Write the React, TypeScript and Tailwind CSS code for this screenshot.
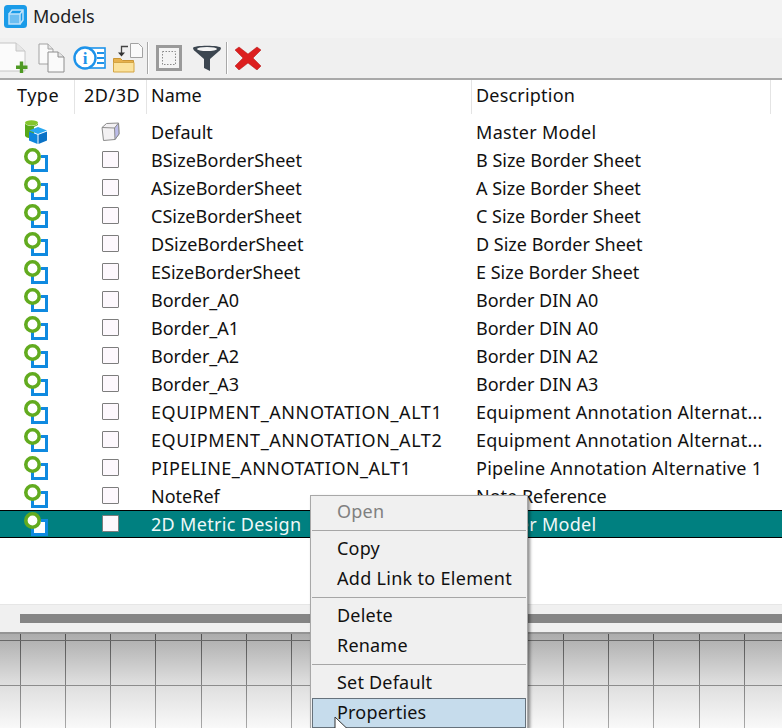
import type { ReactNode } from "react";

const FONT = "font-['Noto_Sans','Liberation_Sans',sans-serif]";

type Model = { name: string; desc: string; nameCls?: string; descCls?: string };

const models: Model[] = [
  { name: "BSizeBorderSheet", desc: "B Size Border Sheet" },
  { name: "ASizeBorderSheet", desc: "A Size Border Sheet" },
  { name: "CSizeBorderSheet", desc: "C Size Border Sheet" },
  { name: "DSizeBorderSheet", desc: "D Size Border Sheet" },
  { name: "ESizeBorderSheet", desc: "E Size Border Sheet" },
  { name: "Border_A0", desc: "Border DIN A0" },
  { name: "Border_A1", desc: "Border DIN A0" },
  { name: "Border_A2", desc: "Border DIN A2" },
  { name: "Border_A3", desc: "Border DIN A3" },
  { name: "EQUIPMENT_ANNOTATION_ALT1", desc: "Equipment Annotation Alternat...", nameCls: "tracking-[0.6px]", descCls: "tracking-[0.25px]" },
  { name: "EQUIPMENT_ANNOTATION_ALT2", desc: "Equipment Annotation Alternat...", nameCls: "tracking-[0.6px]", descCls: "tracking-[0.25px]" },
  { name: "PIPELINE_ANNOTATION_ALT1", desc: "Pipeline Annotation Alternative 1", nameCls: "tracking-[0.46px]", descCls: "tracking-[0.25px]" },
  { name: "NoteRef", desc: "Note Reference" },
];

function SheetIcon({ selected }: { selected?: boolean }) {
  return (
    <svg width="26" height="26" viewBox="0 0 26 26">
      {selected && <rect x="9" y="10" width="13" height="13" fill="#fff" />}
      <path d="M17 9.500h5.500v14H8.500V17" fill="none" stroke="#0f8ae0" strokeWidth="3" />
      <circle cx="8.500" cy="9.500" r="6.700" fill={selected ? "#fff" : "none"} stroke="#62ab1f" strokeWidth="3.600" />
    </svg>
  );
}

function DesignIcon() {
  return (
    <svg width="24" height="24" viewBox="0 0 24 24">
      <ellipse cx="7.500" cy="2.800" rx="6.500" ry="2.600" fill="#84c52c" />
      <path d="M1 3.500v12c0 1.500 3 2.700 6 2.700h3V7l4-2V3.500c-1 1.600-3 2.300-6.500 2.300S2 5 1 3.500z" fill="#58a81a" />
      <path d="M14 7l9 3.500-9 3.500-9-3.500z" fill="#2aa8f0" />
      <path d="M5 11.500l8.500 3.300V24L5 20.500z" fill="#0e86dc" />
      <path d="M23 11.500l-8.500 3.300V24l8.500-3.500z" fill="#0a72c6" />
    </svg>
  );
}

function CubeIcon() {
  return (
    <svg className="-ml-px mb-px" width="19" height="19" viewBox="0 0 19 19">
      <path d="M1 5.500L5.500 1.500 17.500 1 18 12l-4 5.500-11.500 1z" fill="#f3f1f3" stroke="#8c8c8c" />
      <path d="M13.500 6L17.500 1 18 12l-4 5.500z" fill="#bcbce8" stroke="#8c8c8c" />
      <path d="M1 5.500l12.500.5" stroke="#8c8c8c" fill="none" />
    </svg>
  );
}

function Check() {
  return <span className="block mb-px w-[17px] h-[17px] bg-[#fdf8fd] border border-[#7d7d7d] rounded-[1px]" />;
}

function Row({
  type,
  view,
  name,
  desc,
  selected,
  nameCls = "",
  descCls = "",
}: {
  type: ReactNode;
  view: ReactNode;
  name: string;
  desc: string;
  selected?: boolean;
  nameCls?: string;
  descCls?: string;
}) {
  return (
    <div
      className={`grid grid-cols-[75px_72px_325px_1fr] h-[28px] items-center ${
        selected ? "bg-[#008080] text-[#f0f8f8] border-y border-black" : "text-[#111]"
      }`}
    >
      <div className="pl-[24px] flex items-center">{type}</div>
      <div className="pl-[27px] flex items-center">{view}</div>
      <div className={`pl-[4px] whitespace-nowrap ${nameCls}`}>{name}</div>
      <div className={`pl-[4px] whitespace-nowrap ${descCls}`}>{desc}</div>
    </div>
  );
}

function ToolSep() {
  return <div className="w-px h-[32px] bg-[#a8a8a8] border-r border-white box-content" />;
}

function Toolbar() {
  return (
    <div className="h-[42px] bg-[#f0f0f0] border-b-2 border-[#a9a9a9] flex items-center relative overflow-hidden">
      <div className="flex items-center">
        {/* new model */}
        <svg width="29" height="32" viewBox="0 0 29 32">
          <path d="M-4 1h20l9 8v20H-4z" fill="#fbfbfb" stroke="#c6c6c6" />
          <path d="M16 1v8h9" fill="#e6e6e6" stroke="#c6c6c6" />
          <path d="M21.500 19.500v11.500M16 25.200h11.500" stroke="#4f9a24" strokeWidth="3.400" />
        </svg>
        {/* copy */}
        <svg className="ml-[9px]" width="27" height="30" viewBox="0 0 27 30">
          <path d="M1 1h9l5 5v15H1z" fill="#fafafa" stroke="#a2a2a2" />
          <path d="M10 1v5h5" fill="#e4e4e4" stroke="#a2a2a2" />
          <path d="M10 9h10l6 5v15H10z" fill="#fafafa" stroke="#8e8e8e" />
          <path d="M20 9v5h6" fill="#e4e4e4" stroke="#8e8e8e" />
        </svg>
        {/* properties */}
        <svg className="ml-[8px]" width="33" height="24" viewBox="0 0 33 24">
          <rect x="15" y="2" width="17" height="20" fill="#fff" stroke="#1d93ea" strokeWidth="1.600" />
          <path d="M24 7h7M24 12h7M24 17h7" stroke="#1d93ea" strokeWidth="2" />
          <circle cx="12" cy="12" r="10.500" fill="#fff" stroke="#1d93ea" strokeWidth="2.400" />
          <text x="12" y="18" textAnchor="middle" fontSize="17" fontWeight="700" fontFamily="Liberation Serif, serif" fill="#1d93ea">i</text>
        </svg>
        {/* import */}
        <svg className="ml-[6px]" width="31" height="30" viewBox="0 0 31 30">
          <path d="M18.500.5h8l4 4v10h-12z" fill="#fafafa" stroke="#a2a2a2" />
          <path d="M16 3.500h-6.500v8" fill="none" stroke="#444" strokeWidth="1.300" />
          <path d="M6 9.500h7l-3.500 4z" fill="#333" />
          <path d="M1.500 15.500h7l2 2h11v3h-20z" fill="#e7b14c" stroke="#c99535" />
          <path d="M1.500 19.500h20.500v9.500h-20.500z" fill="#fbe29c" stroke="#d3a545" />
        </svg>
        <div className="ml-[4px]"><ToolSep /></div>
        {/* select border */}
        <svg className="ml-[7px]" width="26" height="26" viewBox="0 0 26 26">
          <rect x="1.500" y="1.500" width="23" height="23" fill="#f4f4f4" stroke="#9a9a9a" strokeWidth="3" />
          <rect x="6.500" y="6.500" width="13" height="13" fill="none" stroke="#8a8a8a" strokeDasharray="1.500 1.500" />
        </svg>
        {/* filter */}
        <svg className="ml-[11px]" width="28" height="26" viewBox="0 0 28 26">
          <path d="M0 3c0-3 28-3 28 0 0 2-2 3-3 4l-8 7v12l-6-3v-9L3 7C2 6 0 5 0 3z" fill="#3c4650" />
          <ellipse cx="14" cy="4" rx="10" ry="2" fill="#f4f4f4" />
        </svg>
        <div className="ml-[5px]"><ToolSep /></div>
        {/* delete */}
        <svg className="ml-[7px]" width="26" height="24" viewBox="0 0 26 24">
          <path d="M4 1l9 7 9-7 4 3-8 8 8 8-4 4-9-7-9 7-4-4 8-8-8-8z" fill="#dc1e1e" stroke="#b01414" strokeWidth="0.500" />
        </svg>
      </div>
    </div>
  );
}

function Canvas() {
  const xs = [20.5, 65.5, 110.5, 155.5, 201.5, 246.5, 291.5, 563.5, 608.5, 653.5, 699.5, 744.5];
  return (
    <div className="h-[96px] border-t-2 border-[#949494] bg-gradient-to-b from-[#acacac] via-[#dcdcdc] to-[#f9f9f9]">
      <svg width="782" height="94" className="block">
        <defs>
          <linearGradient id="gridFade" gradientUnits="userSpaceOnUse" x1="0" y1="0" x2="0" y2="94">
            <stop offset="0" stopColor="#505050" />
            <stop offset="1" stopColor="#aaaaaa" />
          </linearGradient>
        </defs>
        {xs.map((x) => (
          <line key={x} x1={x} x2={x} y1="0" y2="94" stroke="url(#gridFade)" />
        ))}
        <line x1="0" x2="782" y1="6.500" y2="6.500" stroke="#686868" />
        <line x1="0" x2="782" y1="51.500" y2="51.500" stroke="#8c8c8c" />
      </svg>
    </div>
  );
}

function MenuItem({ children, disabled, active }: { children: ReactNode; disabled?: boolean; active?: boolean }) {
  return (
    <div
      className={`h-[30px] mx-px pl-[24px] pb-[2px] flex items-center whitespace-nowrap border ${
        active ? "bg-[#c6dcec] border-[#66727c]" : "border-transparent"
      } ${disabled ? "text-[#808080]" : "text-[#111]"}`}
    >
      {children}
    </div>
  );
}

function MenuSep() {
  return <div className="h-px mx-px my-[3px] bg-[#a6a6a6] border-0" />;
}

function ContextMenu() {
  return (
    <div className="absolute left-[310px] top-[495px] w-[218px] h-[233px] overflow-hidden bg-[#f0f0f0] border border-[#a8a8a8] border-b-0 pt-[1px] shadow-[2px_2px_3px_rgba(0,0,0,0.45)] text-[18px] tracking-[0.2px]">
      <MenuItem disabled>Open</MenuItem>
      <MenuSep />
      <MenuItem>Copy</MenuItem>
      <MenuItem><span className="tracking-[0.3px]">Add Link to Element</span></MenuItem>
      <MenuSep />
      <MenuItem>Delete</MenuItem>
      <MenuItem>Rename</MenuItem>
      <MenuSep />
      <MenuItem>Set Default</MenuItem>
      <MenuItem active>Properties</MenuItem>
      <svg className="absolute left-[23px] top-[220px]" width="14" height="20" viewBox="0 0 14 20">
        <path d="M1 1v16l4-3.500 3 6 3-1.500-3-5.500h5z" fill="#fff" stroke="#333" />
      </svg>
    </div>
  );
}

export default function App() {
  return (
    <div className={`relative w-[782px] h-[728px] overflow-hidden bg-white text-[18px] leading-none ${FONT}`}>
      <div className="h-[38px] bg-[#f3f3f3] flex items-center pl-[4px] pb-[6px] gap-[6px]">
        <svg width="23" height="23" viewBox="0 0 23 23">
          <rect width="23" height="23" rx="3.500" fill="#1a9be8" />
          <path d="M5 9h11v10H5z" fill="#bfe2fa" fillOpacity="0.5" stroke="#bfe2fa" strokeWidth="1.500" />
          <path d="M5 9l3-4h11v10l-3 4M16 9l3-4" fill="none" stroke="#bfe2fa" strokeWidth="1.500" />
        </svg>
        <span className="text-[#222]">Models</span>
      </div>
      <Toolbar />
      <div className="grid grid-cols-[75px_72px_325px_299px_1fr] h-[34px] items-center text-[#111]">
        <div className="pl-[17px] pb-[4px] h-full flex items-center border-r border-[#e4e4e4] tracking-[0.5px]">Type</div>
        <div className="pl-[9px] pb-[4px] h-full flex items-center border-r border-[#e4e4e4] tracking-[0.5px]">2D/3D</div>
        <div className="pl-[4px] pb-[4px] h-full flex items-center border-r border-[#e4e4e4]">Name</div>
        <div className="pl-[4px] pb-[4px] h-full flex items-center border-r border-[#e4e4e4] tracking-[0.2px]">Description</div>
        <div />
      </div>
      <div className="pt-[4px]">
        <Row type={<DesignIcon />} view={<CubeIcon />} name="Default" desc="Master Model" descCls="tracking-[0.3px]" />
        {models.map((m) => (
          <Row key={m.name} type={<SheetIcon />} view={<Check />} name={m.name} desc={m.desc} nameCls={m.nameCls} descCls={m.descCls} />
        ))}
        <Row type={<SheetIcon selected />} view={<Check />} name="2D Metric Design" desc="Master Model" selected nameCls="tracking-[0.32px]" descCls="tracking-[0.3px]" />
      </div>
      <div className="h-[66px] bg-white" />
      <div className="h-[28px] bg-[#f0f0f0] border-t border-[#e6e6e6] flex items-center pl-[20px]">
        <div className="h-[9px] w-[762px] bg-[#858585]" />
      </div>
      <Canvas />
      <ContextMenu />
    </div>
  );
}
